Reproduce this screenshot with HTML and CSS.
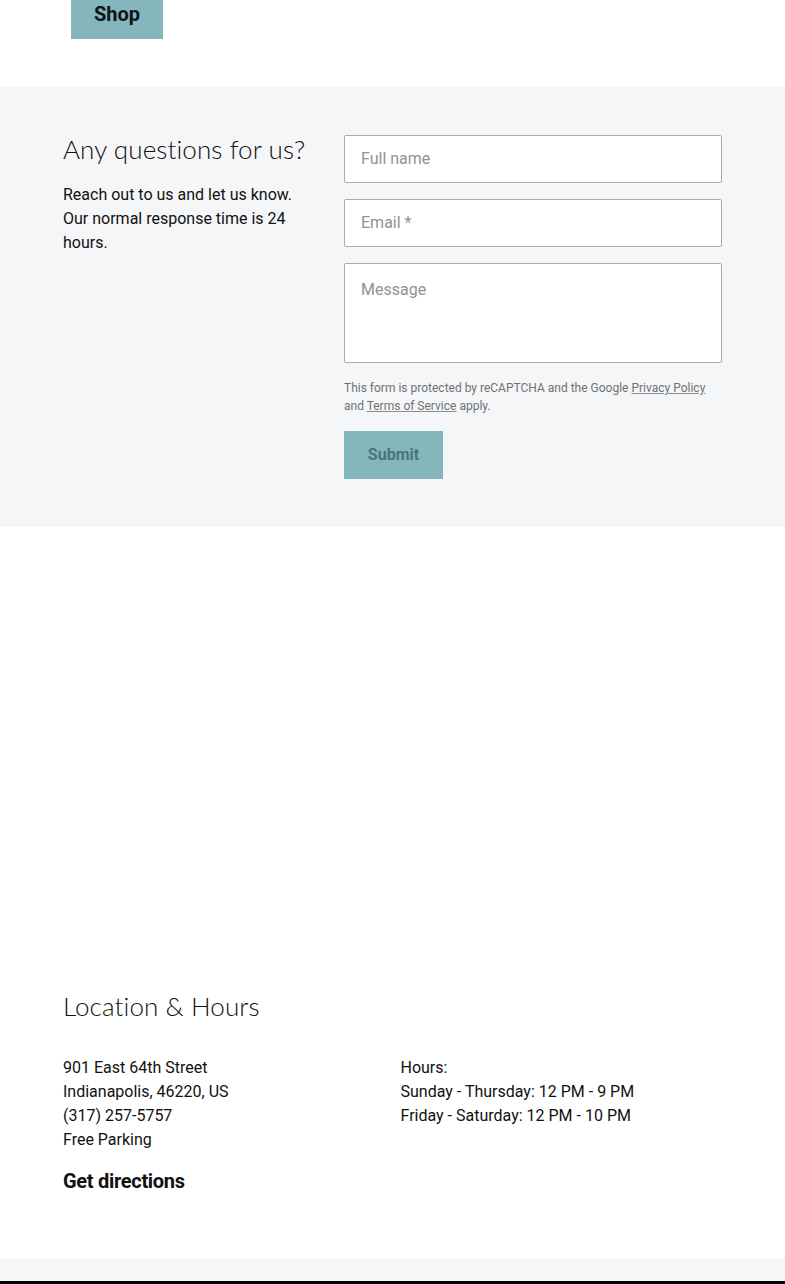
FILE: index.html
```html
<!DOCTYPE html>
<html>
<head>
<meta charset="utf-8">
<link rel="stylesheet" href="styles.css">
</head>
<body>
<div class="top">
  <a class="btn shop">Shop</a>
</div>
<section class="contact">
  <div class="container contact-grid">
    <div class="intro">
      <h2 class="heading">Any questions for us?</h2>
      <p class="lead">Reach out to us and let us know. Our normal response time is 24 hours.</p>
    </div>
    <form class="form">
      <div class="field">Full name</div>
      <div class="field">Email *</div>
      <div class="field area">Message</div>
      <p class="legal">This form is protected by reCAPTCHA and the Google <u>Privacy Policy</u> and <u>Terms of Service</u> apply.</p>
      <div><span class="btn submit">Submit</span></div>
    </form>
  </div>
</section>
<div class="map"></div>
<section class="location">
  <div class="container">
    <h2 class="heading">Location &amp; Hours</h2>
    <div class="loc-grid">
      <div>
        <p class="lines">901 East 64th Street<br>Indianapolis, 46220, US<br>(317) 257-5757<br>Free Parking</p>
        <a class="directions">Get directions</a>
      </div>
      <div>
        <p class="lines">Hours:<br>Sunday - Thursday: 12 PM - 9 PM<br>Friday - Saturday: 12 PM - 10 PM</p>
      </div>
    </div>
  </div>
</section>
<div class="strip"></div>
<div class="footer"></div>
</body>
</html>
```
FILE: styles.css
```css
* { box-sizing: border-box; }
body {
  margin: 0;
  font-family: Roboto, "Liberation Sans", sans-serif;
  color: #111;
  background: #fff;
  overflow: hidden;
}
.container {
  width: 659px;
  margin-left: 63px;
}
.top {
  height: 87px;
  padding-left: 71px;
}
.btn {
  display: inline-flex;
  align-items: center;
  justify-content: center;
  background: #84b6bb;
  font-weight: 700;
  font-size: 20px;
}
.shop {
  width: 92px;
  height: 48px;
  margin-top: -9px;
  padding-bottom: 2px;
  color: #0b1416;
}
.contact {
  background: #f5f6f8;
  padding: 48px 0;
}
.contact-grid {
  display: grid;
  grid-template-columns: 1fr 378px;
  gap: 32px;
}
.heading {
  font-family: Lato, "Open Sans", sans-serif;
  font-weight: 300;
  font-size: 26px;
  line-height: 32px;
  margin: 0;
  color: #111;
  letter-spacing: 0.1px;
}
.intro .heading {
  line-height: 29px;
}
.lead {
  margin: 19px 0 0;
  font-size: 16px;
  line-height: 24px;
}
.form {
  display: flex;
  flex-direction: column;
  gap: 16px;
}
.field {
  height: 48px;
  border: 1px solid #a9abae;
  border-radius: 2px;
  background: #fff;
  color: #909294;
  font-size: 16px;
  padding: 0 16px 1px;
  display: flex;
  align-items: center;
}
.field.area {
  height: 100px;
  align-items: flex-start;
  padding-top: 16px;
}
.legal {
  margin: 0;
  font-size: 12px;
  line-height: 18px;
  color: #6f7275;
}
.legal u { text-decoration-color: #8a8c8f; }
.submit {
  width: 99px;
  height: 48px;
  font-size: 16px;
  padding-bottom: 2px;
  color: #4d7378;
}
.map { height: 416px; }
.location {
  padding: 47px 0 64px;
}
.loc-grid {
  display: grid;
  grid-template-columns: 1fr 1fr;
  gap: 16px;
  margin-top: 34px;
}
.lines {
  margin: 0;
  font-size: 16px;
  line-height: 24px;
}
.directions {
  display: block;
  margin-top: 15px;
  font-weight: 700;
  font-size: 20px;
  line-height: 28px;
  letter-spacing: -0.3px;
}
.strip { height: 22px; background: #f5f6f8; }
.footer { height: 20px; background: #000; }
```
